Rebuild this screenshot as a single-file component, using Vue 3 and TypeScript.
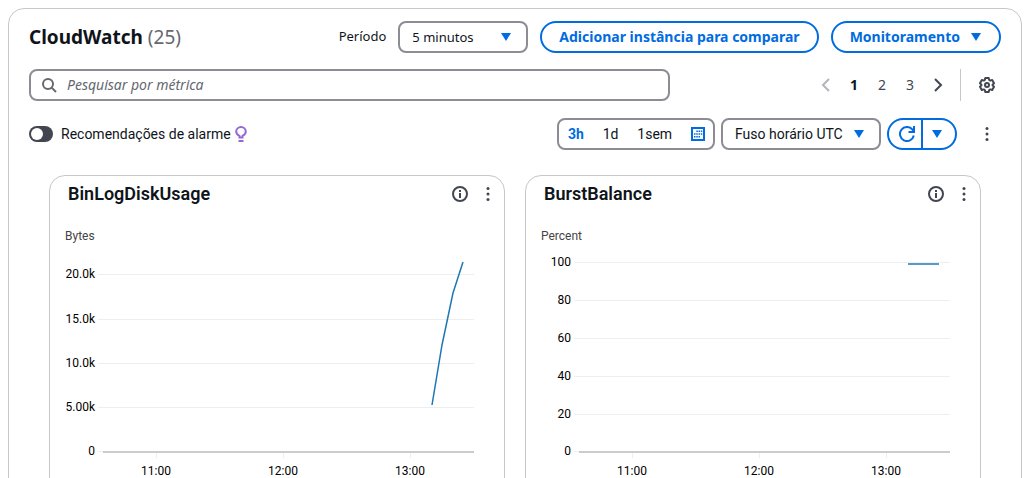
<script setup lang="ts">
import { ref } from 'vue'

interface Tick {
  label: string
  pos: number
}

interface Metric {
  name: string
  unit: string
  yTicks: Tick[]
  points: string
}

const period = ref('5 minutos')
const timezone = ref('Fuso horário UTC')
const query = ref('')
const recommendations = ref(false)
const page = ref(1)
const range = ref('3h')
const ranges = ['3h', '1d', '1sem']

const xTicks: Tick[] = [
  { label: '11:00', pos: 106 },
  { label: '12:00', pos: 233 },
  { label: '13:00', pos: 360 },
]

const metrics: Metric[] = [
  {
    name: 'BinLogDiskUsage',
    unit: 'Bytes',
    yTicks: [
      { label: '20.0k', pos: 62 },
      { label: '15.0k', pos: 107 },
      { label: '10.0k', pos: 151 },
      { label: '5.00k', pos: 195 },
      { label: '0', pos: 239 },
    ],
    points: '382,193 392,133 403,81 413,50',
  },
  {
    name: 'BurstBalance',
    unit: 'Percent',
    yTicks: [
      { label: '100', pos: 50 },
      { label: '80', pos: 88 },
      { label: '60', pos: 126 },
      { label: '40', pos: 164 },
      { label: '20', pos: 202 },
      { label: '0', pos: 239 },
    ],
    points: '382,52 413,52',
  },
]
</script>

<template>
  <main class="panel">
    <header class="row">
      <h1 class="title">CloudWatch <span class="count">(25)</span></h1>
      <div class="actions">
        <label class="period-label" for="period">Período</label>
        <div class="select-box period">
          <select id="period" v-model="period">
            <option>5 minutos</option>
            <option>1 hora</option>
          </select>
          <svg class="caret" viewBox="0 0 12 10" aria-hidden="true"><path d="M1 1h10L6 9z" /></svg>
        </div>
        <button class="pill" type="button">Adicionar instância para comparar</button>
        <button class="pill" type="button">
          Monitoramento
          <svg class="caret" viewBox="0 0 12 10" aria-hidden="true"><path d="M1 1h10L6 9z" /></svg>
        </button>
      </div>
    </header>

    <div class="row">
      <label class="search">
        <svg class="icon" viewBox="0 0 16 16" aria-hidden="true">
          <circle cx="7" cy="7" r="5" />
          <path d="M10.6 10.6 15 15" />
        </svg>
        <input v-model="query" type="text" placeholder="Pesquisar por métrica" aria-label="Pesquisar por métrica" />
      </label>
      <nav class="pages" aria-label="Paginação">
        <button class="cell prev" type="button" aria-label="Anterior" disabled>
          <svg class="icon" viewBox="0 0 16 16"><path d="m11 2-6 6 6 6" /></svg>
        </button>
        <button
          v-for="n in 3"
          :key="n"
          class="cell number"
          :class="{ current: n === page }"
          type="button"
          @click="page = n"
        >{{ n }}</button>
        <button class="cell" type="button" aria-label="Próxima">
          <svg class="icon" viewBox="0 0 16 16"><path d="m5 2 6 6-6 6" /></svg>
        </button>
        <span class="divider"></span>
        <button class="cell" type="button" aria-label="Preferências">
          <svg class="icon gear" viewBox="0 0 16 16">
            <path d="M6.3 1h3.4l.5 2 1 .6 2-.6L15 6.200l-1.400 1.400v.8L15 9.800l-1.800 3.200-2-.6-1 .6-.5 2H6.300l-.5-2-1-.6-2 .6L1 9.800l1.400-1.400v-.8L1 6.200l1.800-3.200 2 .6 1-.6z" />
            <circle cx="8" cy="8" r="2" />
          </svg>
        </button>
      </nav>
    </div>

    <div class="row tools">
      <label class="toggle">
        <input v-model="recommendations" type="checkbox" role="switch" />
        Recomendações de alarme
        <svg class="bulb" viewBox="0 0 12 16" aria-hidden="true">
          <path d="M4.500 11.500V10C2.500 9 1.200 7.800 1.200 5.600a4.800 4.600 0 0 1 9.600 0C10.800 7.800 9.500 9 7.500 10v1.500z" />
          <path d="M3.500 15h5" />
        </svg>
      </label>
      <div class="filters">
        <div class="ranges">
          <button
            v-for="r in ranges"
            :key="r"
            type="button"
            :class="{ active: r === range }"
            @click="range = r"
          >{{ r }}</button>
          <button class="calendar" type="button" aria-label="Personalizado">
            <svg viewBox="0 0 14 14">
              <path class="frame" d="M1 1h12v12H1z" />
              <path class="dots" d="M5.300 4.200h6M3 7h8.300M3 9.800h6" />
            </svg>
          </button>
        </div>
        <div class="select-box zone">
          <select v-model="timezone" aria-label="Fuso horário">
            <option>Fuso horário UTC</option>
            <option>Fuso horário local</option>
          </select>
          <svg class="caret" viewBox="0 0 12 10" aria-hidden="true"><path d="M1 1h10L6 9z" /></svg>
        </div>
        <div class="refresh">
          <button type="button" aria-label="Atualizar">
            <svg class="icon" viewBox="0 0 16 16">
              <path d="M14.800 9.500A7 7 0 1 1 13.500 3.700L15 5.500" />
              <path d="M15 0v6H9.500" />
            </svg>
          </button>
          <button type="button" aria-label="Intervalo de atualização">
            <svg class="caret" viewBox="0 0 12 10"><path d="M1 1h10L6 9z" /></svg>
          </button>
        </div>
        <button class="cell more" type="button" aria-label="Mais ações">
          <svg class="dots-icon" viewBox="0 0 4 16"><circle cx="2" cy="2.500" r="1.500" /><circle cx="2" cy="8" r="1.500" /><circle cx="2" cy="13.500" r="1.500" /></svg>
        </button>
      </div>
    </div>

    <section class="cards">
      <article v-for="m in metrics" :key="m.name" class="card">
        <header class="card-head">
          <h2>{{ m.name }}</h2>
          <button class="cell" type="button" :aria-label="'Informações de ' + m.name">
            <svg class="icon" viewBox="0 0 16 16">
              <circle cx="8" cy="8" r="7" />
              <path d="M8 4v2M8 7v5" />
            </svg>
          </button>
          <button class="cell" type="button" :aria-label="'Ações de ' + m.name">
            <svg class="dots-icon" viewBox="0 0 4 16"><circle cx="2" cy="2.500" r="1.500" /><circle cx="2" cy="8" r="1.500" /><circle cx="2" cy="13.500" r="1.500" /></svg>
          </button>
        </header>
        <svg class="chart" viewBox="0 0 454 300" role="img" :aria-label="m.name">
          <text class="unit" x="15" y="28">{{ m.unit }}</text>
          <g v-for="t in m.yTicks" :key="t.label">
            <rect class="grid" x="48" :y="t.pos" :width="t.label === '0' ? 6 : 376" height="1" />
            <text x="45" :y="t.pos + 4" text-anchor="end">{{ t.label }}</text>
          </g>
          <rect class="axis" x="53" y="239" width="371" height="2" />
          <g v-for="t in xTicks" :key="t.label">
            <rect class="grid" :x="t.pos" y="241" width="1" height="5" />
            <text :x="t.pos" y="263" text-anchor="middle">{{ t.label }}</text>
          </g>
          <polyline :points="m.points" />
        </svg>
      </article>
    </section>
  </main>
</template>

<style>
body {
  margin: 0;
  background: #fff;
  overflow: hidden;
}
</style>

<style scoped>
* {
  box-sizing: border-box;
}

.panel {
  margin: 8px 13px 0 8px;
  padding: 12px 20px 20px;
  border: 1px solid #c6c6cd;
  border-radius: 16px;
  color: #0f141a;
  font: 14px/20px "Noto Sans", "Open Sans", sans-serif;
}

button,
select,
input {
  margin: 0;
  padding: 0;
  border: 0;
  background: none;
  color: inherit;
  font: inherit;
}

svg {
  display: block;
  flex: none;
}

.row {
  display: flex;
  align-items: center;
  justify-content: space-between;
  min-height: 32px;
  margin-bottom: 16px;
}

.title {
  margin: 0;
  font-size: 19px;
  line-height: 24px;
  font-weight: 700;
}

.count {
  color: #656871;
  font-weight: 400;
}

.actions {
  display: flex;
  align-items: center;
  gap: 12px;
  font-size: 13px;
}

.period-label {
  padding-bottom: 2px;
}

.select-box {
  position: relative;
  height: 32px;
}

.select-box select {
  width: 100%;
  height: 32px;
  padding: 0 28px 0 12px;
  border: 2px solid #8c8c94;
  border-radius: 8px;
  appearance: none;
}

.select-box .caret {
  position: absolute;
  right: 16px;
  top: 11px;
}

.period {
  width: 130px;
}

.zone {
  width: 160px;
}

.caret {
  width: 12px;
  height: 10px;
  fill: #006ce0;
}

.pill {
  display: flex;
  align-items: center;
  gap: 10px;
  height: 32px;
  padding: 0 17px;
  border: 2px solid #006ce0;
  border-radius: 16px;
  color: #006ce0;
  font-size: 14px;
  font-weight: 700;
  white-space: nowrap;
}

.search {
  display: flex;
  align-items: center;
  gap: 10px;
  flex: 0 1 641px;
  height: 32px;
  padding: 0 10px;
  border: 2px solid #8c8c94;
  border-radius: 8px;
  color: #656871;
}

.search input {
  flex: 1;
  min-width: 0;
  outline: 0;
  font-size: 14px;
}

.search input::placeholder {
  color: #656871;
  font-style: italic;
  opacity: 1;
}

.icon {
  width: 16px;
  height: 16px;
  fill: none;
  stroke: currentColor;
  stroke-width: 2;
}

.pages {
  display: flex;
  align-items: center;
}

.cell {
  display: flex;
  align-items: center;
  justify-content: center;
  width: 28px;
  height: 28px;
  color: #424650;
}

.prev {
  color: #b4b4bb;
}

.number.current {
  color: #0f141a;
  font-weight: 700;
}

.divider {
  width: 1px;
  height: 32px;
  margin: 0 12px 0 8px;
  background: #c6c6cd;
}

.gear {
  stroke-linejoin: round;
}

.tools {
  margin: 17px 0 25px;
  font-family: Roboto, sans-serif;
}

.toggle {
  display: flex;
  align-items: center;
}

.toggle input {
  display: flex;
  align-items: center;
  width: 24px;
  height: 16px;
  margin-right: 8px;
  padding: 2px;
  border-radius: 8px;
  background: #424650;
  appearance: none;
}

.toggle input::before {
  content: "";
  width: 12px;
  height: 12px;
  border-radius: 6px;
  background: #fff;
}

.toggle input:checked {
  justify-content: flex-end;
  background: #006ce0;
}

.bulb {
  width: 12px;
  height: 16px;
  margin-left: 4px;
  fill: none;
  stroke: #9469d6;
  stroke-width: 2;
}

.filters {
  display: flex;
  align-items: center;
  gap: 6px;
}

.ranges {
  display: flex;
  align-items: center;
  justify-content: space-between;
  width: 158px;
  height: 32px;
  padding: 0 8px 0 9px;
  border: 2px solid #8c8c94;
  border-radius: 8px;
}

.ranges .active {
  color: #006ce0;
  font-weight: 700;
}

.calendar svg {
  width: 14px;
  height: 14px;
  fill: none;
  stroke: #006ce0;
  stroke-width: 2;
}

.calendar .dots {
  stroke-width: 1.5;
  stroke-dasharray: 1.5 0.75;
}

.refresh {
  display: flex;
  width: 70px;
  height: 32px;
  border: 2px solid #006ce0;
  border-radius: 16px;
  color: #006ce0;
}

.refresh button {
  display: flex;
  flex: 1;
  align-items: center;
  justify-content: center;
  padding-left: 4px;
}

.refresh button + button {
  padding: 0 4px 0 0;
  border-left: 2px solid #006ce0;
}

.more {
  margin-left: 10px;
}

.dots-icon {
  width: 4px;
  height: 16px;
  fill: #424650;
}

.cards {
  display: grid;
  grid-template-columns: 1fr 1fr;
  gap: 20px;
  padding: 0 20px;
  font-family: Roboto, sans-serif;
}

.card {
  border: 1px solid #c6c6cd;
  border-radius: 16px;
}

.card-head {
  display: flex;
  align-items: center;
  height: 36px;
  padding: 0 2px 0 18px;
}

.card-head h2 {
  flex: 1;
  margin: 0;
  font-size: 18px;
  line-height: 22px;
  font-weight: 600;
}

.chart {
  width: 100%;
  height: auto;
  font-size: 12px;
}

.chart text {
  fill: #000;
}

.chart .unit {
  fill: #444;
}

.grid {
  fill: #eee;
}

.axis {
  fill: #ccc;
}

.chart polyline {
  fill: none;
  stroke: #1f77b4;
  stroke-width: 1.5px;
}
</style>
